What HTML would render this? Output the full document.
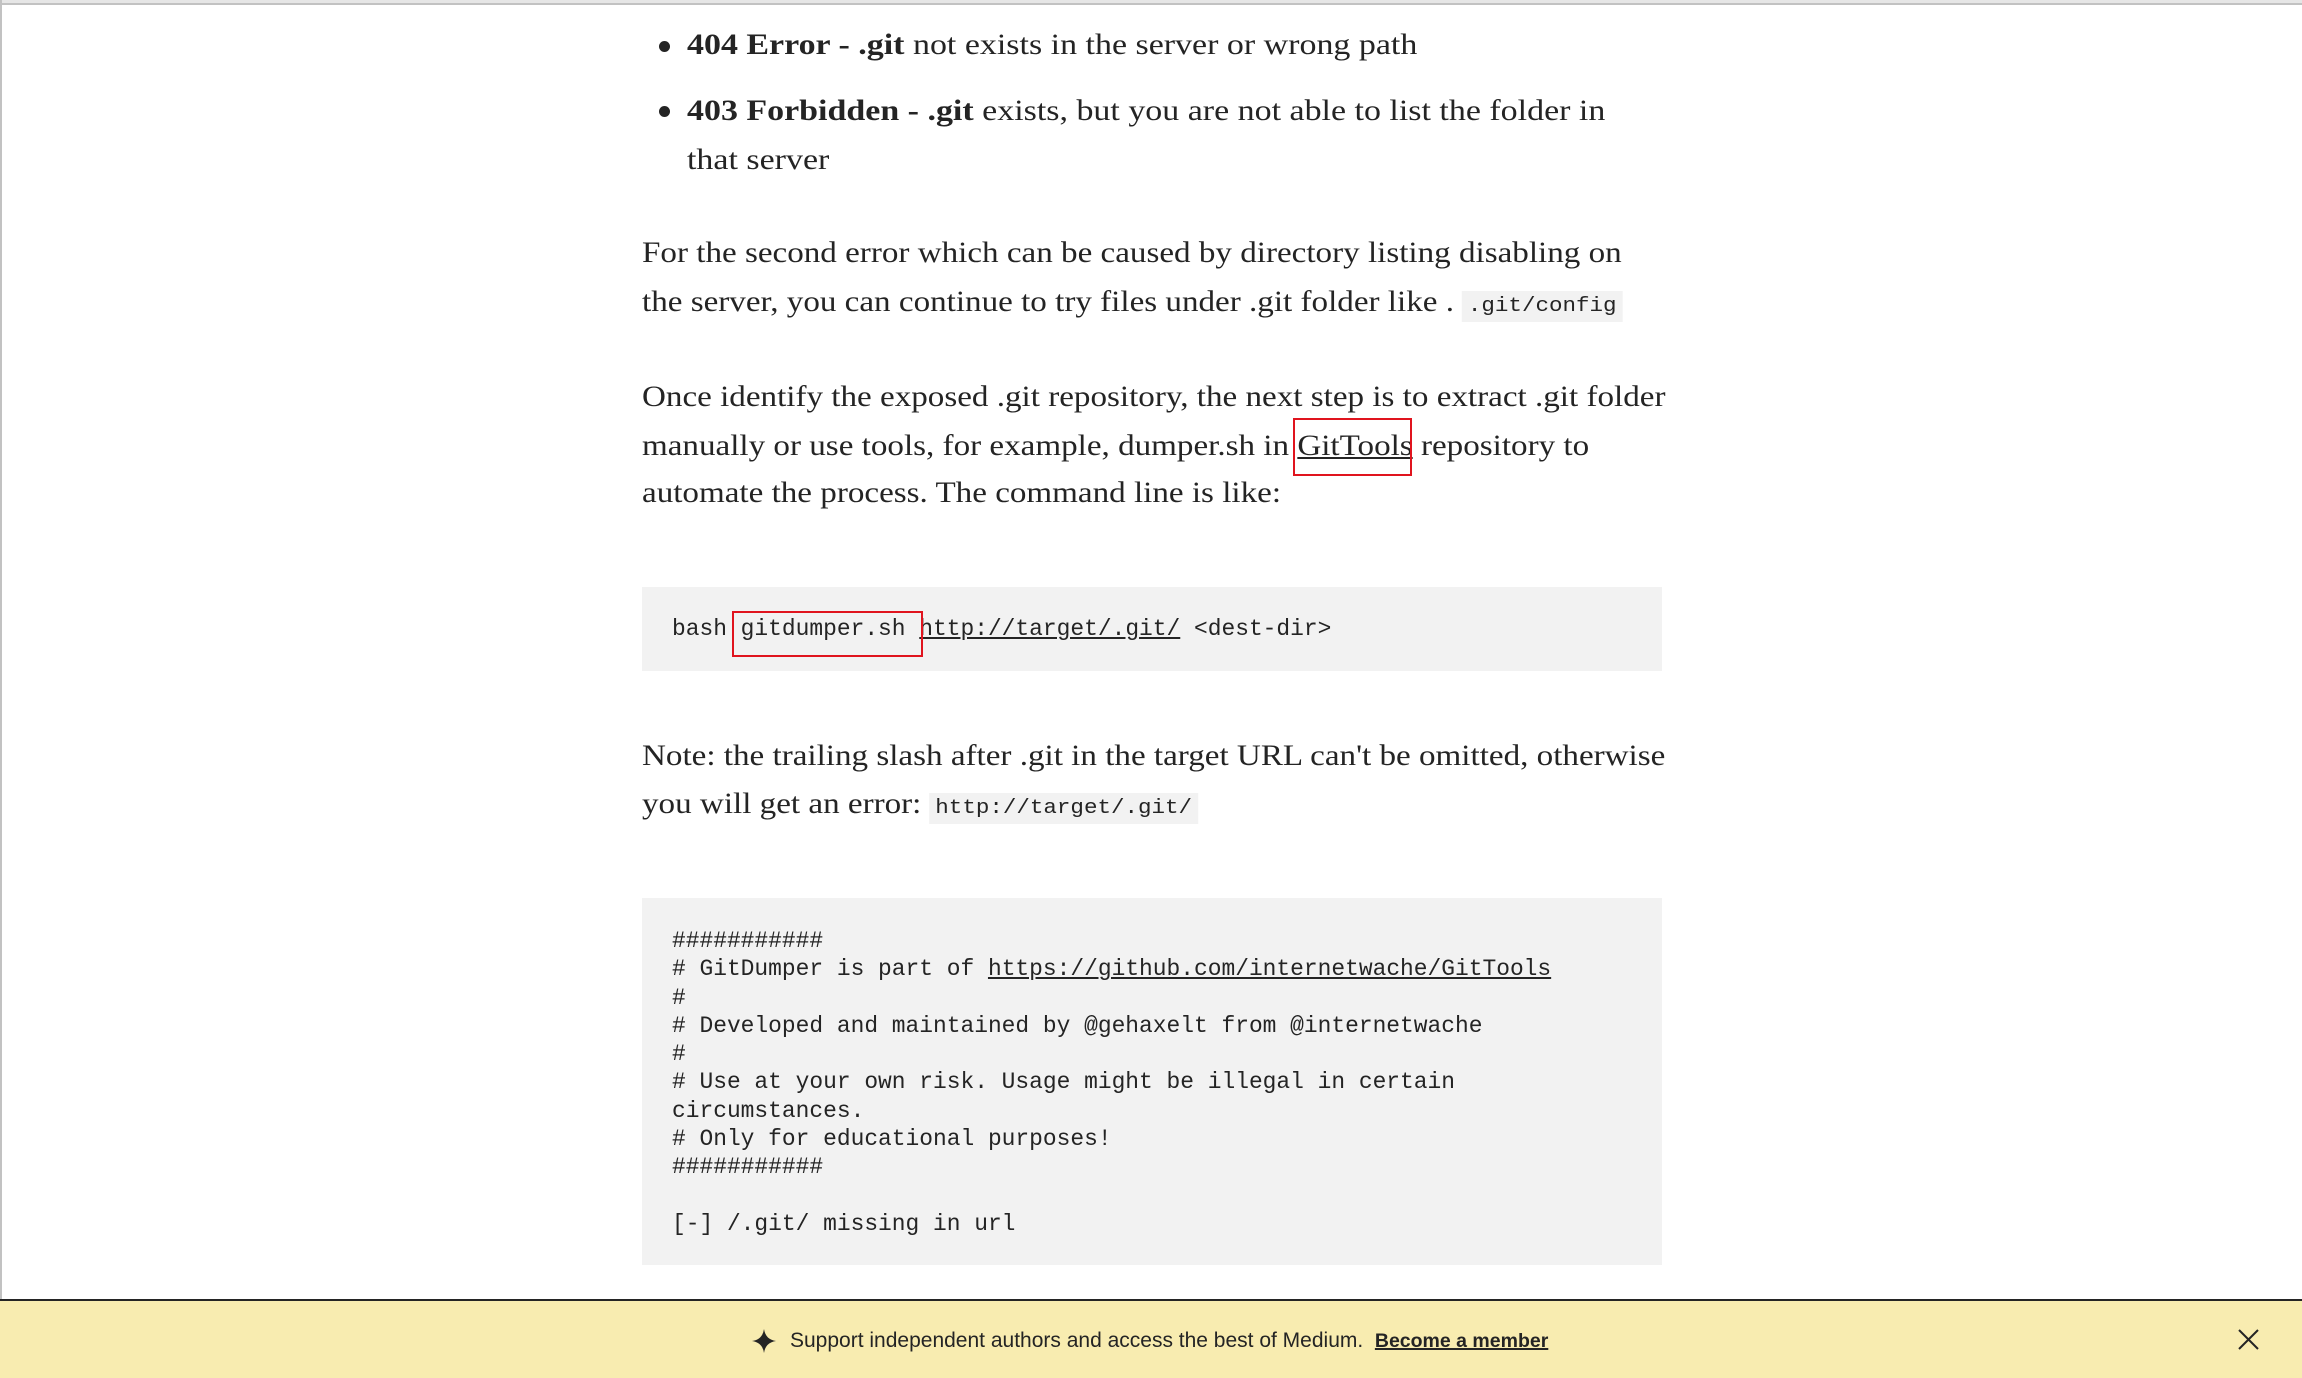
<!DOCTYPE html>
<html><head><meta charset="utf-8"><style>
html,body{margin:0;padding:0;width:2302px;height:1378px;overflow:hidden;background:#fff}
body{position:relative;font-family:"Liberation Serif",serif;color:#242424}
.topl{position:absolute;left:0;top:0;width:2302px;height:3px;background:#e6e6e6}
.topl2{position:absolute;left:0;top:3px;width:2302px;height:2px;background:#c2c2c2}
.leftl{position:absolute;left:0;top:0;width:2px;height:1300px;background:#c2c2c2}
.l{position:absolute;left:642px;white-space:nowrap;font-size:29.4px;line-height:48px;height:48px;transform:scaleX(1.126);transform-origin:0 0}
.b{left:687px;transform:scaleX(1.155)}
.dot{position:absolute;left:659px;width:11px;height:11px;border-radius:50%;background:#242424}
code{font-family:"Liberation Mono",monospace;font-size:20px;background:#f2f2f2;padding:4px 5px}
.cb{position:absolute;left:642px;width:1020px;background:#f2f2f2}
.m{position:absolute;left:672px;font-family:"Liberation Mono",monospace;font-size:22.9px;white-space:pre;line-height:28.3px;color:#242424}
a{color:#242424;text-decoration:underline}
.red{position:absolute;border:2px solid #e0141e;box-sizing:border-box}
.ban{position:absolute;left:0;top:1299px;width:2302px;height:79px;background:#f8ecb0;border-top:2px solid #242424;box-sizing:border-box}
.bt{position:absolute;left:790px;top:1327px;font-family:"Liberation Sans",sans-serif;font-size:21px;line-height:28px;color:#242424;white-space:nowrap}
</style></head><body>
<div class="topl"></div><div class="topl2"></div><div class="leftl"></div>

<div class="dot" style="top:41px"></div>
<div class="l b" style="top:21px"><b>404 Error - .git</b> not exists in the server or wrong path</div>
<div class="dot" style="top:106px"></div>
<div class="l b" style="top:87px"><b>403 Forbidden - .git</b> exists, but you are not able to list the folder in</div>
<div class="l b" style="top:136px">that server</div>

<div class="l" style="top:229px">For the second error which can be caused by directory listing disabling on</div>
<div class="l" style="top:278px">the server, you can continue to try files under .git folder like . <code>.git/config</code></div>

<div class="l" style="top:373px">Once identify the exposed .git repository, the next step is to extract .git folder</div>
<div class="l" style="top:422px">manually or use tools, for example, dumper.sh in <a>GitTools</a> repository to</div>
<div class="l" style="top:469px">automate the process. The command line is like:</div>
<div class="red" style="left:1293px;top:418px;width:119px;height:58px"></div>

<div class="cb" style="top:587px;height:84px"></div>
<div class="m" style="top:615px">bash gitdumper.sh <a>http://target/.git/</a> &lt;dest-dir&gt;</div>
<div class="red" style="left:732px;top:611px;width:191px;height:46px"></div>

<div class="l" style="top:732px">Note: the trailing slash after .git in the target URL can't be omitted, otherwise</div>
<div class="l" style="top:780px">you will get an error: <code>http://target/.git/</code></div>

<div class="cb" style="top:898px;height:367px"></div>
<div class="m" style="top:927px">###########
# GitDumper is part of <a>https://github.com/internetwache/GitTools</a>
#
# Developed and maintained by @gehaxelt from @internetwache
#
# Use at your own risk. Usage might be illegal in certain
circumstances.
# Only for educational purposes!
###########

[-] /.git/ missing in url</div>

<div class="ban"></div>
<svg style="position:absolute;left:752px;top:1329px" width="24" height="24" viewBox="0 0 24 24"><path d="M12 0 Q13.5 10.5 24 12 Q13.5 13.5 12 24 Q10.5 13.5 0 12 Q10.5 10.5 12 0Z" fill="#242424"/></svg>
<div class="bt">Support independent authors and access the best of Medium.&nbsp; <a style="font-weight:bold;font-size:19.5px;text-decoration-thickness:2px">Become a member</a></div>
<svg style="position:absolute;left:2238px;top:1329px" width="21" height="21" viewBox="0 0 21 21"><path d="M1 1L20 20M20 1L1 20" stroke="#242424" stroke-width="2"/></svg>
</body></html>
